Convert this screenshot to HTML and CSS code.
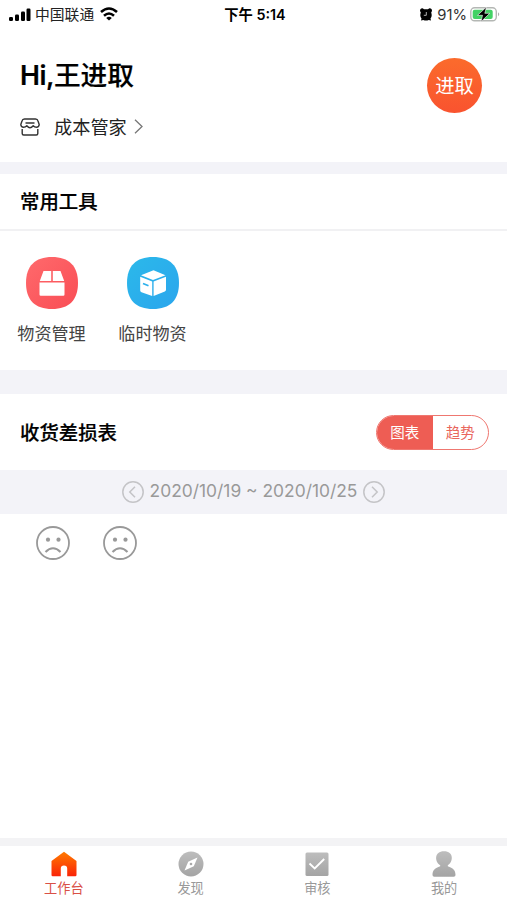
FILE: index.html
```html
<!DOCTYPE html>
<html lang="zh-CN">
<head>
<meta charset="utf-8">
<title>工作台</title>
<link rel="stylesheet" href="styles.css">
</head>
<body>
<div class="app">
  <header class="status">
    <div class="carrier">
      <svg width="22" height="14" viewBox="0 0 22 14"><rect x="0" y="9" width="4" height="4" rx="1.2"/><rect x="6" y="6.500" width="4" height="6.500" rx="1.2"/><rect x="12" y="3.500" width="4" height="9.500" rx="1.2"/><rect x="17.500" y="0.500" width="4" height="12.500" rx="1.2"/></svg>
      <span>中国联通</span>
      <svg class="wifi" width="18" height="14" viewBox="0 0 18 14" fill="none" stroke="#000" stroke-width="2.600"><path d="M1 5Q9-2 17 5M4 8.700Q9 4.300 14 8.700"/><path d="M9 13.500L6.200 10.900Q9 8.700 11.800 10.900Z" fill="#000" stroke="none"/></svg>
    </div>
    <div class="clock">下午 5:14</div>
    <div class="power">
      <svg width="12" height="13" viewBox="0 0 12 13"><path d="M0 3Q0 0 3 .4L4 1.200H8L9 .4Q12 0 12 3L11.200 4.500Q12.500 8.500 10.500 10.500L11 12.500L8.700 12Q6 13 3.300 12L1 12.500L1.500 10.500Q-.5 8.500 .8 4.500Z"/><path d="M6.300 4V7.300H3.800" stroke="#ddd" stroke-width=".8" fill="none"/></svg>
      <span>91%</span>
      <svg class="battery" width="31" height="15" viewBox="0 0 31 15"><rect x=".8" y=".8" width="25.500" height="13" rx="3.800" fill="#fff" stroke="#b4b7b4" stroke-width="1.400"/><rect x="2.700" y="2.700" width="20" height="9.200" rx="2" fill="#43d265"/><path d="M28 5.300Q30.500 7.300 28 9.300Z" fill="#adb0ad"/><path d="M16.500 0L7.500 8.300H12.500L11 14.700L19.800 6.300H14.800Z" stroke="#fff" stroke-width=".6"/></svg>
    </div>
  </header>

  <section class="profile">
    <div>
      <h1><span class="latin">Hi,</span>王进取</h1>
      <div class="shop">
        <svg width="20" height="18" viewBox="0 0 20 18" fill="none" stroke="#333" stroke-width="1.400" stroke-linejoin="round"><path d="M4.500 1H15.500Q17.500 1 18 3L19.200 6.500Q19 9.300 16.500 9.300Q14.500 9.300 13.200 7.800Q11.500 9.800 10 9.800Q8.500 9.800 6.800 7.800Q5.500 9.300 3.500 9.300Q1 9.300 .8 6.500L2 3Q2.500 1 4.500 1ZM5.500 5H14.500M2.200 11V15.500Q2.200 17 3.700 17H16.300Q17.800 17 17.800 15.500V11"/></svg>
        <span>成本管家</span>
        <svg class="chevron" width="9" height="15" viewBox="0 0 9 15" fill="none" stroke="#777" stroke-width="1.300"><path d="M1 .8L8 7.500L1 14.200"/></svg>
      </div>
    </div>
    <div class="avatar">进取</div>
  </section>

  <section class="tools">
    <h2>常用工具</h2>
    <div class="tool-list">
      <div class="tool">
        <svg width="52" height="52" viewBox="0 0 52 52"><defs><linearGradient id="red" x1="0" y1="0" x2="1" y2="1"><stop stop-color="#ff6a6c"/><stop offset="1" stop-color="#f94d55"/></linearGradient></defs><path d="M26 0C43 0 52 9 52 26S43 52 26 52S0 43 0 26S9 0 26 0Z" fill="url(#red)"/><path d="M17.500 14H25.200V24H13.800ZM26.800 14H34.500L38.200 24H26.800ZM13.500 25.600H38.500V37.500Q38.500 38.700 37.300 38.700H14.700Q13.500 38.700 13.500 37.500Z" fill="#fff"/></svg>
        <span>物资管理</span>
      </div>
      <div class="tool">
        <svg width="52" height="52" viewBox="0 0 52 52"><defs><linearGradient id="blue" x1="0" y1="0" x2="1" y2="1"><stop stop-color="#2bb9ea"/><stop offset="1" stop-color="#2ba5ed"/></linearGradient></defs><path d="M26 0C43 0 52 9 52 26S43 52 26 52S0 43 0 26S9 0 26 0Z" fill="url(#blue)"/><path d="M26.500 13.200L38.500 18.300L26 23L14 18.300ZM13.200 19.800L25.200 24.500V39L14.500 35.200Q13.200 34.700 13.200 33.500ZM26.600 24.500L39 19.800V32.800Q39 34 37.800 34.500L26.600 39Z" fill="#fff"/><path d="M16 26.500L21.500 28.700" stroke="#2bb0ec" stroke-width="1.700"/></svg>
        <span>临时物资</span>
      </div>
    </div>
  </section>

  <section class="report">
    <div class="report-head">
      <h2>收货差损表</h2>
      <div class="switch"><span class="on">图表</span><span>趋势</span></div>
    </div>
    <div class="range">
      <svg width="22" height="22" viewBox="0 0 22 22" fill="none" stroke="#c4c4c7" stroke-width="1.500"><circle cx="11" cy="11" r="10.200"/><path d="M13 5.800L7.800 11L13 16.200"/></svg>
      <span>2020/10/19 ~ 2020/10/25</span>
      <svg width="22" height="22" viewBox="0 0 22 22" fill="none" stroke="#c4c4c7" stroke-width="1.500"><circle cx="11" cy="11" r="10.200"/><path d="M9 5.800L14.200 11L9 16.200"/></svg>
    </div>
    <div class="empty">
      <svg width="34" height="34" viewBox="0 0 34 34" fill="none" stroke="#999" stroke-width="1.800"><circle cx="17" cy="17" r="16"/><path d="M9.500 26Q17 18.500 24.500 26" stroke-width="2.100"/><g fill="#999" stroke="none"><circle cx="12" cy="13.700" r="2.100"/><circle cx="22.500" cy="13.700" r="2.100"/></g></svg>
      <svg width="34" height="34" viewBox="0 0 34 34" fill="none" stroke="#999" stroke-width="1.800"><circle cx="17" cy="17" r="16"/><path d="M9.500 26Q17 18.500 24.500 26" stroke-width="2.100"/><g fill="#999" stroke="none"><circle cx="12" cy="13.700" r="2.100"/><circle cx="22.500" cy="13.700" r="2.100"/></g></svg>
    </div>
  </section>

  <nav class="tabs">
    <div class="tab active">
      <svg width="26" height="26" viewBox="0 0 26 26"><defs><linearGradient id="home" x1="0" y1="0" x2="0" y2="1"><stop stop-color="#ff7a00"/><stop offset="1" stop-color="#fa2408"/></linearGradient></defs><path d="M13 .8L25.500 10V24Q25.500 25.200 24.300 25.200H16.200V17.500Q16.200 14.500 13 14.500T9.800 17.500V25.200H1.700Q.5 25.200 .5 24V10Z" fill="url(#home)"/></svg>
      <span>工作台</span>
    </div>
    <div class="tab">
      <svg width="26" height="26" viewBox="0 0 26 26"><defs><linearGradient id="gray" x1="0" y1="0" x2="0" y2="1"><stop stop-color="#bdbdbd"/><stop offset="1" stop-color="#a4a4a4"/></linearGradient></defs><circle cx="13" cy="13" r="12.500" fill="url(#gray)"/><path d="M19.500 6.500L15.800 15.300L6.500 19.500L10.200 10.700Z" fill="#fff"/><circle cx="13" cy="13" r="1.300" fill="#aaa"/></svg>
      <span>发现</span>
    </div>
    <div class="tab">
      <svg width="26" height="26" viewBox="0 0 26 26"><rect x="1.500" y="1.500" width="23" height="23.500" rx="1.500" fill="url(#gray)"/><path d="M5.500 12.500L10.700 17.500L20.200 8" fill="none" stroke="#fff" stroke-width="1.900"/></svg>
      <span>审核</span>
    </div>
    <div class="tab">
      <svg width="26" height="26" viewBox="0 0 26 26"><path d="M13 .3C23 .3 22.500 11 16.800 14.200V15.200C22 17 24.500 19 24.500 24Q24.500 25.700 22.700 25.700H3.300Q1.500 25.700 1.500 24C1.500 19 4 17 9.200 15.200V14.200C3.500 11 3 .3 13 .3Z" fill="url(#gray)"/></svg>
      <span>我的</span>
    </div>
  </nav>
</div>
</body>
</html>
```

FILE: styles.css
```css
* { box-sizing: border-box; }
body {
  margin: 0;
  background: #fff;
  color: #000;
  font-family: Inter, "Noto Sans CJK SC", sans-serif;
}
svg { display: block; flex: none; }
h1, h2 { margin: 0; font-weight: 500; }
h2 { font-size: 19.400px; -webkit-text-stroke: .2px #000; }
.app { height: 900px; display: flex; flex-direction: column; overflow: hidden; }

.status {
  height: 28px;
  padding: 0 6px 0 9px;
  display: grid;
  grid-template-columns: 1fr auto 1fr;
  align-items: center;
  font-size: 14.800px;
  line-height: 28px;
  white-space: nowrap;
}
.carrier, .power { display: flex; align-items: center; }
.carrier { gap: 4px; color: #222; }
.wifi { margin-left: 2px; margin-top: -1px; }
.clock { font-weight: 600; font-size: 14.300px; }
.power { justify-content: flex-end; gap: 5px; color: #333; }
.power span { padding-top: 1px; }
.battery { margin-left: -2px; margin-top: -1px; }

.profile {
  height: 134px;
  padding: 30px 25px 0 20px;
  display: flex;
  justify-content: space-between;
}
.profile h1 { font-size: 26.700px; line-height: 34px; -webkit-text-stroke: .2px #000; }
.latin { font-weight: 600; letter-spacing: -.5px; }
.shop { display: flex; align-items: center; margin-top: 21px; font-size: 18.200px; line-height: 26px; color: #222; }
.shop span { margin-left: 14px; padding-top: 1px; }
.chevron { margin-left: 7px; }
.avatar {
  width: 55px;
  height: 55px;
  border-radius: 50%;
  background: linear-gradient(#fb6b2c, #f9532f);
  color: #fff;
  font-size: 19.300px;
  line-height: 57px;
  text-align: center;
}

.tools { height: 208px; border-top: 12px solid #f3f3f8; }
.tools h2 { height: 57px; padding-left: 20px; border-bottom: 2px solid #f1f1f3; line-height: 57px; }
.tool-list { display: flex; gap: 33px; padding: 26px 17.500px 0; }
.tool { width: 68px; display: flex; flex-direction: column; align-items: center; }
.tool span { margin-top: 12px; font-size: 17.100px; line-height: 26px; color: #444; white-space: nowrap; }

.report { flex: 1; border-top: 24px solid #f3f3f8; }
.report-head { height: 76px; padding: 0 18px 0 20px; display: flex; align-items: center; justify-content: space-between; }
.report-head h2 { padding-bottom: 2px; }
.switch {
  width: 113px;
  height: 35px;
  display: grid;
  grid-template-columns: 1fr 1fr;
  border: 1.500px solid #ef7770;
  border-radius: 18px;
  overflow: hidden;
  color: #e9665d;
  font-size: 14.500px;
  line-height: 34px;
  text-align: center;
}
.switch .on { background: #ee5d54; color: #fff; }
.range { height: 44px; display: flex; align-items: center; justify-content: center; gap: 6px; background: #f3f3f8; color: #999; font-size: 17.400px; white-space: nowrap; }
.range span { padding-bottom: 3px; }
.empty { display: flex; gap: 33px; padding: 12px 36px; }

.tabs { height: 62px; border-top: 8px solid #f3f3f5; display: grid; grid-template-columns: repeat(4, 1fr); }
.tab { display: flex; flex-direction: column; align-items: center; padding: 5px 0 0 1px; color: #999; font-size: 13.200px; line-height: 20px; }
.tab span { margin-top: 1px; }
.tab.active { color: #d95046; }
```
